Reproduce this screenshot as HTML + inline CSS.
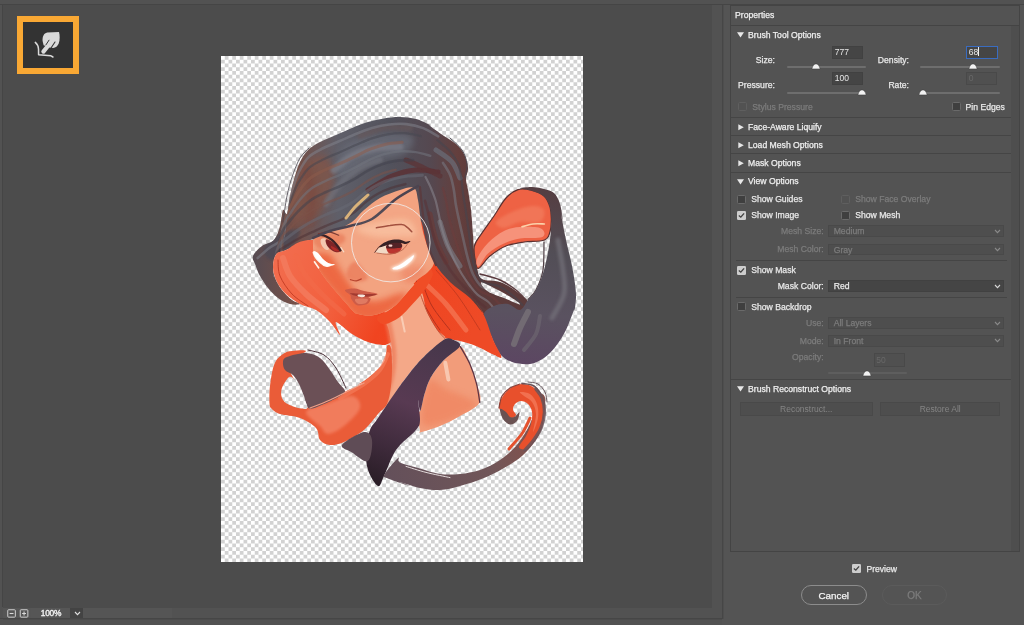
<!DOCTYPE html>
<html lang="en">
<head>
<meta charset="utf-8">
<title>Liquify</title>
<style>
*{box-sizing:border-box;margin:0;padding:0}
html,body{width:1024px;height:625px;overflow:hidden;background:#4c4c4c}
body{position:relative;font-family:"Liberation Sans",sans-serif;font-size:8.5px;color:#e6e6e6}
.abs{position:absolute}
.t{position:absolute;white-space:nowrap;color:#e9e9e9;-webkit-text-stroke:0.25px currentColor}
.t.b{color:#efefef}
.t.dis{color:#7c7c7c}
.t.big{color:#f4f4f4;-webkit-text-stroke:0.25px #f4f4f4}
.hl{position:absolute;height:1px}
.t.z{color:#f2f2f2;-webkit-text-stroke:0.35px #f2f2f2}
.inp{position:absolute;background:#454545;border:1px solid #414141;color:#e6e6e6;padding-left:1.8px;font-size:8.5px;white-space:nowrap}
.inp.focus{border:1px solid #3a6cc0;background:#454545}
.inp.disabled{background:#505050;border-color:#494949;color:#686868}
.caret{display:inline-block;width:1px;height:9px;background:#f0f0f0;vertical-align:-1.5px}
.track{position:absolute;height:2px;border-radius:1px}
.cb{position:absolute;border:1px solid #6a6a6a;background:#3f3f3f;border-radius:1.5px}
.cb.d{border-color:#5f5f5f;background:#525252}
.sel{position:absolute;background:#4e4e4e;border:1px solid #494949;color:#858585;padding-left:4.5px;font-size:8.5px;white-space:nowrap}
.sel.en{background:#454545;border-color:#414141;color:#e9e9e9}
.btn{position:absolute;background:#4e4e4e;border:1px solid #494949;color:#858585;text-align:center;font-size:8.5px}
.pill{position:absolute;border:1px solid #8c8c8c;border-radius:10px}
.pill.off{border-color:#5b5b5b}
</style>
</head>
<body><div id="root" style="position:absolute;left:0;top:0;width:1024px;height:625px;will-change:transform">
<!-- frame -->
<div class="abs" style="left:0;top:0;width:1024px;height:5px;background:#525252"></div>
<div class="abs" style="left:0;top:4px;width:1024px;height:1px;background:#454545"></div>
<div class="abs" style="left:0;top:5px;width:3px;height:620px;background:#525252"></div>
<div class="abs" style="left:2px;top:5px;width:1px;height:602px;background:#454545"></div>

<!-- canvas -->
<div id="canvas" class="abs" style="left:221px;top:56px;width:362px;height:506px;overflow:hidden">
<svg width="362" height="506" viewBox="221 56 362 506" style="position:absolute;left:0;top:0;display:block">
<defs>
<pattern id="chk" x="221" y="56" width="7.5" height="7.5" patternUnits="userSpaceOnUse">
<rect width="7.5" height="7.5" fill="#ffffff"/><rect x="3.75" y="0" width="3.75" height="3.75" fill="#d2d2d2"/><rect x="0" y="3.75" width="3.75" height="3.75" fill="#d2d2d2"/>
</pattern>
<filter id="b1" filterUnits="userSpaceOnUse" x="221" y="56" width="362" height="506"><feGaussianBlur stdDeviation="0.6"/></filter>
<filter id="b2" filterUnits="userSpaceOnUse" x="221" y="56" width="362" height="506"><feGaussianBlur stdDeviation="1.5"/></filter>
<filter id="b3" filterUnits="userSpaceOnUse" x="221" y="56" width="362" height="506"><feGaussianBlur stdDeviation="3"/></filter>
<filter id="b5" filterUnits="userSpaceOnUse" x="221" y="56" width="362" height="506"><feGaussianBlur stdDeviation="5"/></filter>

<linearGradient id="gStrand" gradientUnits="userSpaceOnUse" x1="540" y1="190" x2="520" y2="365">
<stop offset="0" stop-color="#553e42"/><stop offset="0.35" stop-color="#524e56"/><stop offset="0.7" stop-color="#5a5260"/><stop offset="1" stop-color="#5c4662"/></linearGradient>
<linearGradient id="gHair" gradientUnits="userSpaceOnUse" x1="255" y1="200" x2="475" y2="200">
<stop offset="0" stop-color="#584c52"/><stop offset="0.18" stop-color="#755048"/><stop offset="0.38" stop-color="#5f5f69"/><stop offset="0.62" stop-color="#52525c"/><stop offset="0.8" stop-color="#554850"/><stop offset="0.92" stop-color="#643f3d"/><stop offset="1" stop-color="#5c3b3b"/></linearGradient>
<linearGradient id="gTop" gradientUnits="userSpaceOnUse" x1="440" y1="340" x2="380" y2="485">
<stop offset="0" stop-color="#47374b"/><stop offset="0.45" stop-color="#583a52"/><stop offset="0.75" stop-color="#3f2b3c"/><stop offset="1" stop-color="#291d26"/></linearGradient>
<linearGradient id="gSwoosh" gradientUnits="userSpaceOnUse" x1="390" y1="480" x2="545" y2="420">
<stop offset="0" stop-color="#64505a"/><stop offset="0.6" stop-color="#715658"/><stop offset="1" stop-color="#8a5048"/></linearGradient>
<linearGradient id="gRed" gradientUnits="userSpaceOnUse" x1="270" y1="250" x2="470" y2="340">
<stop offset="0" stop-color="#f26e50"/><stop offset="0.35" stop-color="#f2603e"/><stop offset="0.6" stop-color="#f04420"/><stop offset="1" stop-color="#ee4a26"/></linearGradient>
<clipPath id="cFace"><path d="M314.0 237.0C315.2 235.3 316.3 236.2 320.0 235.0C323.7 233.8 330.7 232.2 336.0 230.0C341.3 227.8 347.3 225.3 352.0 222.0C356.7 218.7 359.3 214.0 364.0 210.0C368.7 206.0 374.0 201.3 380.0 198.0C386.0 194.7 394.3 191.7 400.0 190.0C405.7 188.3 411.0 186.3 414.0 188.0C417.0 189.7 417.0 195.5 418.0 200.0C419.0 204.5 419.2 209.7 420.0 215.0C420.8 220.3 421.7 226.5 423.0 232.0C424.3 237.5 426.2 243.0 428.0 248.0C429.8 253.0 434.0 258.0 434.0 262.0C434.0 266.0 431.0 268.8 428.0 272.0C425.0 275.2 419.7 277.3 416.0 281.0C412.3 284.7 410.0 289.5 406.0 294.0C402.0 298.5 397.7 304.4 392.0 308.0C386.3 311.6 377.7 314.5 372.0 315.5C366.3 316.5 361.0 314.6 358.0 314.0C355.0 313.4 355.9 313.9 353.8 312.0C351.7 310.1 348.8 306.2 345.4 302.4C342.0 298.6 337.5 293.8 333.6 289.0C329.7 284.2 325.0 278.9 321.8 273.8C318.6 268.8 315.8 263.5 314.3 258.7C312.8 253.9 313.1 248.6 313.0 245.0C312.9 241.4 312.8 238.7 314.0 237.0Z"/></clipPath>
<clipPath id="cSh"><path d="M459.9 346.2C464.4 346.9 467.5 358.7 470.3 364.9C473.0 371.1 475.0 377.4 476.5 383.6C478.1 389.9 482.4 397.0 479.6 402.4C476.9 407.7 466.6 412.1 460.0 416.0C453.4 419.9 446.7 423.3 440.0 426.0C433.3 428.7 423.3 431.7 420.0 432.4C416.7 433.1 420.5 433.4 420.0 430.0C419.5 426.6 416.9 415.2 417.0 412.0C417.1 408.8 419.1 413.7 420.3 410.7C421.6 407.7 422.8 399.6 424.5 394.0C426.2 388.5 427.6 382.9 430.7 377.4C433.9 371.8 438.4 365.9 443.2 360.7C448.1 355.5 455.4 345.5 459.9 346.2Z"/></clipPath>
<clipPath id="cHair"><path d="M253.0 256.0C254.2 253.0 258.5 248.7 262.0 246.0C265.5 243.3 271.0 243.3 274.0 240.0C277.0 236.7 278.5 231.0 280.0 226.0C281.5 221.0 281.8 212.0 283.0 210.0C284.2 208.0 285.8 216.3 287.0 214.0C288.2 211.7 288.7 202.3 290.0 196.0C291.3 189.7 293.3 181.7 295.0 176.0C296.7 170.3 297.8 166.3 300.0 162.0C302.2 157.7 304.7 153.3 308.0 150.0C311.3 146.7 315.3 144.5 320.0 142.0C324.7 139.5 330.7 137.3 336.0 135.0C341.3 132.7 346.7 130.2 352.0 128.0C357.3 125.8 362.7 123.6 368.0 122.0C373.3 120.4 378.7 119.2 384.0 118.4C389.3 117.6 394.7 116.9 400.0 117.0C405.3 117.1 411.0 117.7 416.0 119.0C421.0 120.3 427.7 123.8 430.0 125.0C432.3 126.2 427.7 124.2 430.0 126.0C432.3 127.8 439.7 133.0 444.0 136.0C448.3 139.0 452.7 141.0 456.0 144.0C459.3 147.0 462.0 150.0 464.0 154.0C466.0 158.0 467.7 163.8 468.0 168.0C468.3 172.2 466.0 175.3 466.0 179.0C466.0 182.7 467.2 184.8 468.0 190.0C468.8 195.2 470.2 202.5 471.0 210.0C471.8 217.5 472.7 231.7 473.0 235.0C473.3 238.3 472.8 227.5 473.0 230.0C473.2 232.5 473.3 243.7 474.0 250.0C474.7 256.3 475.7 263.2 477.0 268.0C478.3 272.8 478.2 276.7 482.0 279.0C485.8 281.3 494.3 280.0 500.0 282.0C505.7 284.0 511.3 287.8 516.0 291.0C520.7 294.2 524.0 297.8 528.0 301.0C532.0 304.2 541.3 306.5 540.0 310.0C538.7 313.5 528.3 317.8 520.0 322.0C511.7 326.2 500.0 337.0 490.0 335.0C480.0 333.0 468.3 319.2 460.0 310.0C451.7 300.8 446.7 290.0 440.0 280.0C433.3 270.0 430.0 258.3 420.0 250.0C410.0 241.7 393.3 232.7 380.0 230.0C366.7 227.3 351.7 232.3 340.0 234.0C328.3 235.7 319.0 237.3 310.0 240.0C301.0 242.7 291.7 247.7 286.0 250.0C280.3 252.3 278.2 251.3 276.0 254.0C273.8 256.7 273.2 262.0 273.0 266.0C272.8 270.0 273.5 274.0 275.0 278.0C276.5 282.0 279.2 286.3 282.0 290.0C284.8 293.7 289.0 297.7 292.0 300.0C295.0 302.3 300.3 303.3 300.0 304.0C299.7 304.7 293.7 305.0 290.0 304.0C286.3 303.0 281.7 300.7 278.0 298.0C274.3 295.3 271.0 291.7 268.0 288.0C265.0 284.3 262.2 280.0 260.0 276.0C257.8 272.0 256.2 267.3 255.0 264.0C253.8 260.7 251.8 259.0 253.0 256.0Z"/></clipPath>

</defs>
<rect x="221" y="56" width="362" height="506" fill="url(#chk)"/>
<g>
<path d="M481.0 234.4C484.3 229.4 489.8 222.1 494.0 216.0C498.2 209.9 502.0 202.4 506.0 198.0C510.0 193.6 513.8 190.9 518.0 189.6C522.2 188.3 526.7 189.1 531.0 190.2C535.3 191.3 540.8 193.2 544.0 196.0C547.2 198.8 548.7 202.9 550.0 207.2C551.3 211.5 551.3 221.2 551.6 222.0C551.9 222.8 551.8 210.7 551.6 212.0C551.4 213.3 551.6 225.3 550.4 230.0C549.2 234.7 548.8 238.0 544.4 240.0C540.0 242.0 530.4 241.0 524.0 242.0C517.6 243.0 511.7 243.7 506.0 246.0C500.3 248.3 494.6 252.3 490.0 256.0C485.4 259.7 480.9 267.7 478.4 268.4C475.9 269.1 475.9 263.7 475.2 260.0C474.5 256.3 473.4 250.3 474.4 246.0C475.4 241.7 477.7 239.4 481.0 234.4Z" fill="#ee6244" stroke="#5a3030" stroke-width="1.2" stroke-linecap="round" stroke-linejoin="round" />
<path d="M477.0 259.0C478.5 255.1 483.5 247.7 488.0 243.0C492.5 238.3 498.7 233.7 504.0 231.0C509.3 228.3 513.8 227.4 520.0 227.0C526.2 226.6 537.3 226.7 541.0 228.4C544.7 230.1 545.9 235.3 542.4 237.0C538.9 238.7 526.4 237.3 520.0 238.4C513.6 239.5 509.3 240.9 504.0 243.4C498.7 245.9 492.2 249.6 488.0 253.4C483.8 257.2 480.6 265.5 478.8 266.4C477.0 267.3 475.5 262.9 477.0 259.0Z" fill="#f6927a" filter="url(#b1)" />
<path d="M496.0 222.0C497.3 219.3 506.0 214.7 512.0 212.0C518.0 209.3 526.7 206.3 532.0 206.0C537.3 205.7 542.7 207.3 544.0 210.0C545.3 212.7 544.0 220.0 540.0 222.0C536.0 224.0 526.0 221.0 520.0 222.0C514.0 223.0 508.0 228.0 504.0 228.0C500.0 228.0 494.7 224.7 496.0 222.0Z" fill="#f27a5c" opacity="0.8" filter="url(#b2)" />
<path d="M522.0 226.8C523.8 226.3 529.3 224.5 533.0 224.0C536.7 223.5 542.5 224.0 544.4 224.0" fill="none" stroke="#fbd2aa" stroke-width="1.6" stroke-linecap="round" stroke-linejoin="round" />
<path d="M480.0 274.0C483.3 275.0 494.0 277.3 500.0 280.0C506.0 282.7 511.6 286.6 516.0 290.0C520.4 293.4 524.7 298.7 526.4 300.4" fill="none" stroke="#5a3a3e" stroke-width="1.5" stroke-linecap="round" stroke-linejoin="round" />
<path d="M544.0 242.0C543.8 246.7 544.3 262.0 543.0 270.0C541.7 278.0 538.5 285.1 536.0 290.0C533.5 294.9 529.3 298.0 528.0 299.6" fill="none" stroke="#4e3e44" stroke-width="1.2" stroke-linecap="round" stroke-linejoin="round" />
<path d="M253.0 256.0C254.2 253.0 258.5 248.7 262.0 246.0C265.5 243.3 271.0 243.3 274.0 240.0C277.0 236.7 278.5 231.0 280.0 226.0C281.5 221.0 281.8 212.0 283.0 210.0C284.2 208.0 285.8 216.3 287.0 214.0C288.2 211.7 288.7 202.3 290.0 196.0C291.3 189.7 293.3 181.7 295.0 176.0C296.7 170.3 297.8 166.3 300.0 162.0C302.2 157.7 304.7 153.3 308.0 150.0C311.3 146.7 315.3 144.5 320.0 142.0C324.7 139.5 330.7 137.3 336.0 135.0C341.3 132.7 346.7 130.2 352.0 128.0C357.3 125.8 362.7 123.6 368.0 122.0C373.3 120.4 378.7 119.2 384.0 118.4C389.3 117.6 394.7 116.9 400.0 117.0C405.3 117.1 411.0 117.7 416.0 119.0C421.0 120.3 427.7 123.8 430.0 125.0C432.3 126.2 427.7 124.2 430.0 126.0C432.3 127.8 439.7 133.0 444.0 136.0C448.3 139.0 452.7 141.0 456.0 144.0C459.3 147.0 462.0 150.0 464.0 154.0C466.0 158.0 467.7 163.8 468.0 168.0C468.3 172.2 466.0 175.3 466.0 179.0C466.0 182.7 467.2 184.8 468.0 190.0C468.8 195.2 470.2 202.5 471.0 210.0C471.8 217.5 472.7 231.7 473.0 235.0C473.3 238.3 472.8 227.5 473.0 230.0C473.2 232.5 473.3 243.7 474.0 250.0C474.7 256.3 475.7 263.2 477.0 268.0C478.3 272.8 478.2 276.7 482.0 279.0C485.8 281.3 494.3 280.0 500.0 282.0C505.7 284.0 511.3 287.8 516.0 291.0C520.7 294.2 524.0 297.8 528.0 301.0C532.0 304.2 541.3 306.5 540.0 310.0C538.7 313.5 528.3 317.8 520.0 322.0C511.7 326.2 500.0 337.0 490.0 335.0C480.0 333.0 468.3 319.2 460.0 310.0C451.7 300.8 446.7 290.0 440.0 280.0C433.3 270.0 430.0 258.3 420.0 250.0C410.0 241.7 393.3 232.7 380.0 230.0C366.7 227.3 351.7 232.3 340.0 234.0C328.3 235.7 319.0 237.3 310.0 240.0C301.0 242.7 291.7 247.7 286.0 250.0C280.3 252.3 278.2 251.3 276.0 254.0C273.8 256.7 273.2 262.0 273.0 266.0C272.8 270.0 273.5 274.0 275.0 278.0C276.5 282.0 279.2 286.3 282.0 290.0C284.8 293.7 289.0 297.7 292.0 300.0C295.0 302.3 300.3 303.3 300.0 304.0C299.7 304.7 293.7 305.0 290.0 304.0C286.3 303.0 281.7 300.7 278.0 298.0C274.3 295.3 271.0 291.7 268.0 288.0C265.0 284.3 262.2 280.0 260.0 276.0C257.8 272.0 256.2 267.3 255.0 264.0C253.8 260.7 251.8 259.0 253.0 256.0Z" fill="url(#gHair)" />
<g clip-path="url(#cHair)">
<path d="M300.0 170.0C305.3 160.3 318.3 155.0 324.0 156.0C329.7 157.0 333.7 168.0 334.0 176.0C334.3 184.0 330.7 196.3 326.0 204.0C321.3 211.7 311.7 220.3 306.0 222.0C300.3 223.7 293.0 222.7 292.0 214.0C291.0 205.3 294.7 179.7 300.0 170.0Z" fill="#80554a" opacity="0.8" filter="url(#b3)" />
<path d="M344.0 146.0C350.7 139.0 368.7 135.7 380.0 134.0C391.3 132.3 408.0 132.7 412.0 136.0C416.0 139.3 411.3 149.7 404.0 154.0C396.7 158.3 378.7 158.3 368.0 162.0C357.3 165.7 344.0 178.7 340.0 176.0C336.0 173.3 337.3 153.0 344.0 146.0Z" fill="#686a76" opacity="0.8" filter="url(#b3)" />
<path d="M264.0 248.0C265.3 243.7 274.0 237.0 280.0 234.0C286.0 231.0 298.0 228.0 300.0 230.0C302.0 232.0 296.7 241.0 292.0 246.0C287.3 251.0 276.7 259.7 272.0 260.0C267.3 260.3 262.7 252.3 264.0 248.0Z" fill="#4c4a54" opacity="0.8" filter="url(#b2)" />
<path d="M334.0 170.0C337.0 167.7 345.0 159.7 352.0 156.0C359.0 152.3 368.0 149.5 376.0 148.0C384.0 146.5 396.0 147.2 400.0 147.0" fill="none" stroke="#7c7d87" stroke-width="7" stroke-linecap="round" stroke-linejoin="round" opacity="0.75" filter="url(#b2)" />
<path d="M326.0 204.0C328.3 200.7 334.3 190.0 340.0 184.0C345.7 178.0 353.3 172.0 360.0 168.0C366.7 164.0 376.7 161.3 380.0 160.0" fill="none" stroke="#71727c" stroke-width="6" stroke-linecap="round" stroke-linejoin="round" opacity="0.7" filter="url(#b2)" />
<path d="M306.0 170.0C307.0 174.0 311.3 185.3 312.0 194.0C312.7 202.7 310.3 217.3 310.0 222.0" fill="none" stroke="#7a4a40" stroke-width="9" stroke-linecap="round" stroke-linejoin="round" opacity="0.7" filter="url(#b3)" />
<path d="M360.0 136.0C364.0 134.7 375.7 129.3 384.0 128.0C392.3 126.7 405.7 128.0 410.0 128.0" fill="none" stroke="#66585c" stroke-width="6" stroke-linecap="round" stroke-linejoin="round" opacity="0.7" filter="url(#b2)" />
<path d="M368.0 190.0C372.0 187.7 384.0 179.3 392.0 176.0C400.0 172.7 408.3 170.7 416.0 170.0C423.7 169.3 434.3 171.7 438.0 172.0" fill="none" stroke="#5c3236" stroke-width="5" stroke-linecap="round" stroke-linejoin="round" opacity="0.85" filter="url(#b1)" />
<path d="M406.0 160.0C409.0 161.3 418.3 165.3 424.0 168.0C429.7 170.7 437.3 174.7 440.0 176.0" fill="none" stroke="#5c3438" stroke-width="5" stroke-linecap="round" stroke-linejoin="round" opacity="0.8" filter="url(#b1)" />
<path d="M436.0 150.0C438.7 152.0 448.0 157.3 452.0 162.0C456.0 166.7 458.7 175.3 460.0 178.0" fill="none" stroke="#6b6e7a" stroke-width="5" stroke-linecap="round" stroke-linejoin="round" opacity="0.7" filter="url(#b1)" />
<path d="M440.0 222.0C441.3 226.0 444.7 238.7 448.0 246.0C451.3 253.3 458.0 262.7 460.0 266.0" fill="none" stroke="#77757c" stroke-width="5" stroke-linecap="round" stroke-linejoin="round" opacity="0.7" filter="url(#b1)" />
<path d="M430.0 214.0C431.0 218.3 433.3 232.0 436.0 240.0C438.7 248.0 444.3 258.3 446.0 262.0" fill="none" stroke="#6a3a38" stroke-width="5" stroke-linecap="round" stroke-linejoin="round" opacity="0.7" filter="url(#b1)" />
<path d="M438.2 136.3C435.7 135.0 428.5 130.2 423.2 128.1C417.9 126.1 412.1 124.7 406.5 124.1C400.8 123.5 394.8 123.8 389.1 124.5C383.4 125.1 377.6 126.4 372.1 128.0C366.5 129.6 361.1 131.8 355.7 134.0C350.3 136.2 345.0 138.7 339.6 141.0C334.3 143.3 328.7 145.3 323.5 148.0C318.3 150.7 312.6 153.1 308.6 157.1C304.5 161.0 301.7 166.4 299.1 171.5C296.5 176.5 294.8 182.1 293.0 187.6C291.3 193.0 289.7 198.5 288.4 204.1C287.1 209.7 286.3 215.6 285.4 221.4C284.4 227.1 285.3 234.2 282.7 238.6C280.1 242.9 273.8 244.5 269.6 247.7C265.4 250.9 259.7 256.3 257.7 258.0" fill="none" stroke="#80818b" stroke-width="2.6" stroke-linecap="round" stroke-linejoin="round" opacity="0.55" filter="url(#b1)" />
<path d="M420.7 136.1C417.9 135.6 409.8 133.5 404.3 133.2C398.8 132.9 393.0 133.5 387.5 134.4C382.0 135.3 376.5 136.8 371.2 138.6C365.8 140.4 360.8 142.9 355.6 145.1C350.4 147.4 345.2 149.9 339.9 152.2C334.7 154.5 329.3 156.4 324.2 159.0C319.1 161.6 313.5 164.0 309.4 167.6C305.3 171.3 302.2 176.2 299.4 180.9C296.5 185.5 294.5 190.7 292.4 195.7C290.3 200.7 288.2 205.7 286.8 211.0C285.4 216.4 284.5 222.3 283.8 227.9C283.0 233.5 282.4 241.8 282.1 244.6" fill="none" stroke="#474751" stroke-width="2.2" stroke-linecap="round" stroke-linejoin="round" opacity="0.55" filter="url(#b1)" />
<path d="M402.2 142.3C399.4 142.6 391.2 143.1 385.9 144.3C380.6 145.4 375.3 147.2 370.2 149.2C365.2 151.2 360.4 153.9 355.4 156.3C350.4 158.7 345.4 161.1 340.3 163.4C335.2 165.7 329.8 167.5 324.8 170.0C319.8 172.5 314.4 174.8 310.2 178.2C306.1 181.6 302.8 186.0 299.7 190.3C296.6 194.5 294.2 199.2 291.8 203.8C289.4 208.4 286.8 212.9 285.2 218.0C283.6 223.1 282.8 229.0 282.1 234.4C281.5 239.9 282.8 246.3 281.5 250.7C280.2 255.0 275.6 258.7 274.4 260.3" fill="none" stroke="#8c5c4c" stroke-width="3" stroke-linecap="round" stroke-linejoin="round" opacity="0.55" filter="url(#b1)" />
<path d="M430.3 155.8C427.9 155.2 420.7 152.8 415.6 152.1C410.6 151.4 405.2 151.1 400.0 151.4C394.8 151.8 389.4 152.8 384.3 154.2C379.2 155.6 374.2 157.6 369.3 159.8C364.5 162.0 360.0 165.0 355.3 167.4C350.5 169.9 345.6 172.4 340.6 174.6C335.6 176.9 330.4 178.6 325.5 181.0C320.5 183.4 315.3 185.7 311.1 188.8C306.9 191.9 303.3 195.8 300.0 199.7C296.7 203.5 293.9 207.7 291.2 212.0C288.4 216.2 285.4 220.1 283.7 224.9C281.9 229.8 281.0 235.7 280.5 241.0C280.1 246.3 281.6 252.4 280.9 256.7C280.3 261.0 277.9 263.4 276.8 266.6C275.6 269.8 274.7 274.4 274.2 276.0" fill="none" stroke="#72747e" stroke-width="2.4" stroke-linecap="round" stroke-linejoin="round" opacity="0.55" filter="url(#b1)" />
<path d="M413.1 160.1C410.6 160.2 402.9 159.9 397.9 160.6C392.8 161.2 387.6 162.4 382.7 164.1C377.8 165.7 373.0 167.9 368.4 170.4C363.8 172.8 359.7 176.0 355.1 178.6C350.5 181.2 345.7 183.6 340.9 185.8C336.1 188.1 330.9 189.8 326.1 192.0C321.3 194.3 316.2 196.5 311.9 199.3C307.6 202.2 303.9 205.6 300.3 209.1C296.7 212.5 293.6 216.3 290.5 220.1C287.5 223.9 284.0 227.3 282.1 231.9C280.2 236.4 279.2 242.3 278.9 247.5C278.6 252.6 280.1 260.2 280.4 262.8" fill="none" stroke="#43434d" stroke-width="2.6" stroke-linecap="round" stroke-linejoin="round" opacity="0.55" filter="url(#b1)" />
<path d="M395.7 169.7C393.3 170.4 385.8 172.1 381.1 174.0C376.4 175.8 371.9 178.3 367.5 181.0C363.1 183.6 359.3 187.0 355.0 189.7C350.6 192.4 345.9 194.8 341.2 197.1C336.5 199.3 331.5 200.9 326.7 203.0C322.0 205.2 317.1 207.3 312.8 209.9C308.4 212.5 304.4 215.4 300.6 218.5C296.8 221.5 293.2 224.8 289.9 228.2C286.5 231.6 282.6 234.5 280.5 238.8C278.4 243.1 277.5 249.0 277.3 254.0C277.2 259.0 279.1 264.6 279.8 268.8C280.5 273.0 281.3 277.4 281.5 279.2" fill="none" stroke="#7c5248" stroke-width="2.2" stroke-linecap="round" stroke-linejoin="round" opacity="0.55" filter="url(#b1)" />
<path d="M422.4 175.2C420.0 175.4 412.9 175.5 408.1 176.1C403.3 176.7 398.3 177.5 393.6 178.8C388.8 180.1 384.0 181.7 379.5 183.9C375.0 186.0 370.7 188.7 366.6 191.5C362.5 194.4 359.0 198.1 354.8 200.9C350.6 203.7 346.1 206.1 341.5 208.3C337.0 210.5 332.0 212.0 327.4 214.0C322.7 216.1 318.0 218.2 313.6 220.5C309.2 222.8 305.0 225.2 300.9 227.9C296.9 230.5 292.9 233.4 289.3 236.3C285.6 239.3 281.2 241.7 279.0 245.7C276.7 249.8 275.7 255.7 275.7 260.5C275.8 265.4 277.8 270.7 279.2 274.9C280.6 279.0 282.0 282.3 283.9 285.4C285.9 288.6 289.7 292.6 290.8 294.0" fill="none" stroke="#686a74" stroke-width="3" stroke-linecap="round" stroke-linejoin="round" opacity="0.55" filter="url(#b1)" />
<path d="M405.5 184.1C403.2 184.8 396.0 186.3 391.4 187.9C386.8 189.5 382.2 191.4 377.9 193.8C373.6 196.1 369.6 199.1 365.7 202.1C361.8 205.2 358.6 209.1 354.6 212.0C350.7 214.9 346.3 217.3 341.9 219.5C337.4 221.7 332.6 223.1 328.0 225.0C323.5 227.0 318.9 229.0 314.5 231.1C310.0 233.1 305.5 235.0 301.2 237.3C296.9 239.5 292.6 241.9 288.6 244.5C284.7 247.0 279.8 248.9 277.4 252.7C275.0 256.4 273.9 262.4 274.1 267.1C274.3 271.8 277.9 278.6 278.6 280.9" fill="none" stroke="#4d3236" stroke-width="2.4" stroke-linecap="round" stroke-linejoin="round" opacity="0.55" filter="url(#b1)" />
<path d="M437.4 140.2C439.3 141.8 445.6 146.4 449.0 150.2C452.4 154.0 455.6 158.3 457.7 162.9C459.8 167.5 460.5 172.7 461.4 177.8C462.3 182.9 462.3 188.2 463.0 193.4C463.7 198.6 464.7 203.8 465.5 208.9C466.3 214.1 467.1 219.2 467.8 224.3C468.5 229.4 469.2 234.6 469.9 239.7C470.5 244.8 471.0 249.9 471.9 255.0C472.9 260.0 473.5 265.4 475.4 270.0C477.3 274.5 479.6 279.6 483.5 282.3C487.3 284.9 493.8 283.9 498.5 285.9C503.1 287.9 507.4 291.1 511.4 294.3C515.4 297.5 520.7 303.3 522.6 305.1" fill="none" stroke="#45454f" stroke-width="2.2" stroke-linecap="round" stroke-linejoin="round" opacity="0.55" filter="url(#b1)" />
<path d="M443.0 162.8C444.2 164.9 448.5 171.0 450.3 175.4C452.1 179.9 452.9 184.8 453.8 189.7C454.7 194.5 455.0 199.6 455.8 204.5C456.7 209.4 457.7 214.3 458.8 219.1C459.8 224.0 460.9 228.7 462.0 233.4C463.1 238.2 464.1 243.0 465.2 247.6C466.3 252.3 467.3 256.9 468.7 261.5C470.0 266.0 471.2 270.8 473.4 275.0C475.5 279.1 478.0 283.8 481.6 286.5C485.2 289.2 492.9 290.5 495.1 291.3" fill="none" stroke="#787a84" stroke-width="2.6" stroke-linecap="round" stroke-linejoin="round" opacity="0.55" filter="url(#b1)" />
<path d="M442.9 188.0C443.5 190.2 445.3 197.0 446.2 201.6C447.2 206.2 447.7 211.0 448.6 215.6C449.6 220.2 450.8 224.9 452.1 229.4C453.3 233.9 454.8 238.2 456.2 242.6C457.7 246.9 459.0 251.3 460.6 255.6C462.1 259.8 463.6 263.9 465.4 268.0C467.2 272.0 469.0 276.2 471.4 280.0C473.8 283.8 476.3 287.9 479.7 290.7C483.1 293.5 488.2 294.0 491.8 296.6C495.4 299.2 499.7 304.5 501.3 306.1" fill="none" stroke="#6e3e3c" stroke-width="2.4" stroke-linecap="round" stroke-linejoin="round" opacity="0.55" filter="url(#b1)" />
<path d="M425.5 176.9C426.4 178.8 429.3 184.2 431.0 188.2C432.6 192.1 434.3 196.3 435.6 200.5C436.8 204.7 437.6 209.2 438.6 213.5C439.6 217.9 440.3 222.4 441.5 226.7C442.6 231.1 443.9 235.4 445.4 239.6C446.9 243.8 448.7 247.7 450.5 251.7C452.2 255.7 454.0 259.7 455.9 263.5C457.9 267.3 459.9 270.9 462.1 274.5C464.4 278.1 466.7 281.6 469.3 285.0C472.0 288.4 474.6 292.1 477.8 294.9C481.0 297.7 485.5 299.1 488.5 302.0C491.6 304.8 493.9 308.5 496.2 312.1C498.6 315.6 501.5 321.5 502.6 323.4" fill="none" stroke="#8a8890" stroke-width="2.2" stroke-linecap="round" stroke-linejoin="round" opacity="0.55" filter="url(#b1)" />
<path d="M425.0 200.8C425.5 202.9 427.2 208.9 428.2 213.0C429.2 217.1 430.0 221.3 431.0 225.4C432.0 229.6 433.0 233.8 434.3 237.8C435.6 241.9 436.9 246.0 438.6 249.8C440.4 253.7 442.6 257.2 444.7 260.8C446.8 264.4 448.9 268.0 451.3 271.4C453.7 274.8 456.2 277.9 458.9 281.0C461.6 284.1 464.5 287.0 467.3 290.0C470.2 293.0 473.0 296.2 475.9 299.1C478.9 302.0 483.7 305.9 485.2 307.3" fill="none" stroke="#5a3236" stroke-width="2.6" stroke-linecap="round" stroke-linejoin="round" opacity="0.55" filter="url(#b1)" />
</g>
<path d="M283.0 222.0C283.7 217.7 285.4 203.7 287.0 196.0C288.6 188.3 290.2 182.3 292.4 176.0C294.6 169.7 297.2 162.7 300.0 158.0C302.8 153.3 307.5 149.7 309.0 148.0" fill="none" stroke="#4a4650" stroke-width="0.8" stroke-linecap="round" stroke-linejoin="round" />
<path d="M450.0 138.0C452.0 140.0 459.2 145.7 462.0 150.0C464.8 154.3 466.5 159.3 467.0 164.0C467.5 168.7 465.3 175.7 465.0 178.0" fill="none" stroke="#4a4650" stroke-width="0.9" stroke-linecap="round" stroke-linejoin="round" />
<path d="M481.0 282.4C482.3 282.0 490.8 286.4 496.0 289.0C501.2 291.6 508.0 295.4 512.0 298.0C516.0 300.6 521.3 304.4 520.0 304.4C518.7 304.4 509.3 300.1 504.0 298.0C498.7 295.9 491.8 294.2 488.0 291.6C484.2 289.0 479.7 282.8 481.0 282.4Z" fill="url(#chk)" />
<path d="M520.0 188.4C520.1 187.8 528.0 186.9 532.0 187.0C536.0 187.1 540.3 188.0 544.0 189.0C547.7 190.0 551.3 190.5 554.0 193.0C556.7 195.5 558.5 199.2 560.0 204.0C561.5 208.8 562.8 220.3 563.0 222.0C563.2 223.7 560.5 211.0 561.0 214.0C561.5 217.0 564.2 231.3 566.0 240.0C567.8 248.7 570.3 257.0 572.0 266.0C573.7 275.0 575.7 286.0 576.0 294.0C576.3 302.0 574.3 311.3 574.0 314.0C573.7 316.7 575.3 307.3 574.0 310.0C572.7 312.7 569.0 324.0 566.0 330.0C563.0 336.0 559.7 341.3 556.0 346.0C552.3 350.7 548.3 355.0 544.0 358.0C539.7 361.0 535.3 363.3 530.0 364.0C524.7 364.7 517.0 363.7 512.0 362.0C507.0 360.3 503.3 358.0 500.0 354.0C496.7 350.0 494.3 343.3 492.0 338.0C489.7 332.7 486.7 323.3 486.0 322.0C485.3 320.7 488.3 331.3 488.0 330.0C487.7 328.7 483.0 318.0 484.0 314.0C485.0 310.0 490.0 307.7 494.0 306.0C498.0 304.3 503.7 303.3 508.0 304.0C512.3 304.7 516.7 310.7 520.0 310.0C523.3 309.3 525.3 303.3 528.0 300.0C530.7 296.7 533.3 295.0 536.0 290.0C538.7 285.0 541.7 278.3 544.0 270.0C546.3 261.7 548.7 249.3 550.0 240.0C551.3 230.7 551.3 217.0 551.6 214.0C551.9 211.0 551.9 223.1 551.6 222.0C551.3 220.9 551.2 211.8 550.0 207.6C548.8 203.4 547.5 199.6 544.4 196.8C541.3 194.0 535.7 192.0 531.6 190.6C527.5 189.2 519.9 189.0 520.0 188.4Z" fill="url(#gStrand)" />
<path d="M558.0 240.0C558.8 245.0 562.0 261.0 563.0 270.0C564.0 279.0 565.8 286.0 564.0 294.0C562.2 302.0 554.0 314.0 552.0 318.0" fill="none" stroke="#75727a" stroke-width="5" stroke-linecap="round" stroke-linejoin="round" opacity="0.7" filter="url(#b2)" />
<path d="M528.0 312.0C526.7 314.7 522.3 322.7 520.0 328.0C517.7 333.3 515.0 341.3 514.0 344.0" fill="none" stroke="#787278" stroke-width="6" stroke-linecap="round" stroke-linejoin="round" opacity="0.8" filter="url(#b1)" />
<path d="M540.0 316.0C539.3 319.0 538.7 328.3 536.0 334.0C533.3 339.7 526.0 347.3 524.0 350.0" fill="none" stroke="#6d6670" stroke-width="4" stroke-linecap="round" stroke-linejoin="round" opacity="0.7" filter="url(#b1)" />
<path d="M312.0 240.0C296.3 240.0 292.0 247.6 286.0 250.0C280.0 252.4 278.2 251.4 276.0 254.4C273.8 257.4 272.8 263.4 273.0 268.0C273.2 272.6 274.8 277.7 277.0 282.0C279.2 286.3 282.2 290.3 286.0 294.0C289.8 297.7 295.0 301.3 300.0 304.0C305.0 306.7 311.0 307.0 316.0 310.0C321.0 313.0 326.0 317.8 330.0 322.0C334.0 326.2 339.0 335.0 340.0 335.0C341.0 335.0 334.0 322.2 336.0 322.0C338.0 321.8 346.7 330.7 352.0 334.0C357.3 337.3 362.7 340.2 368.0 342.0C373.3 343.8 380.0 345.0 384.0 345.0C388.0 345.0 389.1 342.5 392.0 342.0C394.9 341.5 395.5 343.7 401.6 342.0C407.7 340.3 421.4 332.2 428.7 331.6C435.9 331.0 440.1 336.7 445.3 338.3C450.5 339.8 454.7 339.7 459.9 341.0C465.1 342.3 471.0 343.9 476.5 346.2C482.1 348.4 489.0 352.7 493.2 354.5C497.3 356.3 501.5 359.4 501.5 357.0C501.5 354.6 495.9 346.6 493.2 339.9C490.4 333.3 487.6 323.3 484.8 317.0C482.1 310.8 479.3 307.0 476.5 302.5C473.7 298.0 466.9 288.1 468.2 290.0C469.4 291.9 483.7 312.7 484.0 314.0C484.3 315.3 475.7 303.3 470.0 298.0C464.3 292.7 456.0 288.0 450.0 282.0C444.0 276.0 438.0 269.0 434.0 262.0C430.0 255.0 428.3 246.7 426.0 240.0C423.7 233.3 421.7 217.0 420.0 222.0C418.3 227.0 422.7 265.3 416.0 270.0C409.3 274.7 397.3 255.0 380.0 250.0C362.7 245.0 327.7 240.0 312.0 240.0Z" fill="url(#gRed)" />
<path d="M283.0 258.0C284.2 261.0 286.2 270.0 290.0 276.0C293.8 282.0 300.0 288.3 306.0 294.0C312.0 299.7 322.7 307.3 326.0 310.0" fill="none" stroke="#f47c5e" stroke-width="6" stroke-linecap="round" stroke-linejoin="round" opacity="0.8" filter="url(#b1)" />
<path d="M296.0 256.0C297.7 259.3 301.3 269.3 306.0 276.0C310.7 282.7 317.7 289.7 324.0 296.0C330.3 302.3 340.7 311.0 344.0 314.0" fill="none" stroke="#f36a48" stroke-width="5" stroke-linecap="round" stroke-linejoin="round" opacity="0.7" filter="url(#b1)" />
<path d="M428.0 286.0C431.0 289.0 439.7 296.7 446.0 304.0C452.3 311.3 462.7 325.7 466.0 330.0" fill="none" stroke="#f57a58" stroke-width="5" stroke-linecap="round" stroke-linejoin="round" opacity="0.7" filter="url(#b1)" />
<path d="M278.0 260.0C278.3 262.7 277.7 270.3 280.0 276.0C282.3 281.7 287.3 289.0 292.0 294.0C296.7 299.0 305.3 304.0 308.0 306.0" fill="none" stroke="#c23a22" stroke-width="0.9" stroke-linecap="round" stroke-linejoin="round" />
<path d="M422.0 282.0C423.7 286.0 427.3 298.0 432.0 306.0C436.7 314.0 447.0 326.0 450.0 330.0" fill="none" stroke="#b5321e" stroke-width="1.0" stroke-linecap="round" stroke-linejoin="round" />
<path d="M436.0 270.0C439.7 274.3 450.7 286.0 458.0 296.0C465.3 306.0 476.3 324.3 480.0 330.0" fill="none" stroke="#c2391f" stroke-width="0.9" stroke-linecap="round" stroke-linejoin="round" />
<path d="M416.0 278.0C416.7 281.0 417.3 289.3 420.0 296.0C422.7 302.7 428.7 312.3 432.0 318.0C435.3 323.7 438.7 328.0 440.0 330.0" fill="none" stroke="#b5321e" stroke-width="1.0" stroke-linecap="round" stroke-linejoin="round" />
<path d="M385.0 310.8C382.9 319.1 387.9 324.7 389.1 331.6C390.3 338.5 391.9 345.5 392.2 352.4C392.6 359.4 392.6 365.9 391.2 373.2C389.8 380.5 385.7 390.6 383.9 396.1C382.2 401.7 380.4 404.9 380.8 406.5C381.3 408.1 383.2 409.5 386.6 405.7C390.1 401.9 396.7 390.4 401.6 383.6C406.5 376.8 411.3 370.5 416.2 364.9C421.0 359.4 425.9 354.7 430.7 350.3C435.6 346.0 444.3 342.4 445.3 338.9C446.3 335.4 440.1 334.2 437.0 329.5C433.9 324.9 429.4 317.4 426.6 310.8C423.8 304.2 424.5 294.9 420.3 290.0C416.2 285.1 407.5 278.2 401.6 281.7C395.7 285.1 387.0 302.5 385.0 310.8Z" fill="#f4a888" />
<path d="M388.1 321.2C389.0 326.4 392.8 343.1 393.3 352.4C393.8 361.8 392.9 369.1 391.2 377.4C389.5 385.7 384.3 398.2 382.9 402.4" fill="none" stroke="#ee7c58" stroke-width="6" stroke-linecap="round" stroke-linejoin="round" opacity="0.75" filter="url(#b2)" />
<path d="M401.6 317.0 L404.7 331.6" fill="none" stroke="#fbd5c0" stroke-width="2" stroke-linecap="round" stroke-linejoin="round" opacity="0.8" filter="url(#b1)" />
<path d="M420.3 294.2C421.6 297.3 424.8 306.9 427.6 312.9C430.5 318.9 434.5 325.6 437.4 329.9C440.3 334.3 444.0 337.4 445.3 338.9" fill="none" stroke="#c04a30" stroke-width="0.9" stroke-linecap="round" stroke-linejoin="round" />
<path d="M426.1 267.1C423.5 268.2 421.3 275.8 417.6 280.5C414.0 285.3 408.7 290.9 404.2 295.7C399.7 300.4 395.2 305.5 390.8 309.1C386.3 312.8 378.4 315.0 377.3 317.5C376.2 320.0 380.4 324.2 384.0 324.2C387.7 324.2 394.4 320.9 399.2 317.5C403.9 314.2 408.3 308.8 412.6 304.1C416.9 299.3 421.8 294.0 425.2 288.9C428.6 283.9 432.6 277.5 432.8 273.8C432.9 270.2 428.6 266.0 426.1 267.1Z" fill="#f04e28" filter="url(#b1)" />
<path d="M459.9 346.2C464.4 346.9 467.5 358.7 470.3 364.9C473.0 371.1 475.0 377.4 476.5 383.6C478.1 389.9 482.4 397.0 479.6 402.4C476.9 407.7 466.6 412.1 460.0 416.0C453.4 419.9 446.7 423.3 440.0 426.0C433.3 428.7 423.3 431.7 420.0 432.4C416.7 433.1 420.5 433.4 420.0 430.0C419.5 426.6 416.9 415.2 417.0 412.0C417.1 408.8 419.1 413.7 420.3 410.7C421.6 407.7 422.8 399.6 424.5 394.0C426.2 388.5 427.6 382.9 430.7 377.4C433.9 371.8 438.4 365.9 443.2 360.7C448.1 355.5 455.4 345.5 459.9 346.2Z" fill="#f29c7a" />
<g clip-path="url(#cSh)">
<path d="M445.3 362.8 L448.4 379.5" fill="none" stroke="#f9cdb6" stroke-width="4" stroke-linecap="round" stroke-linejoin="round" opacity="0.9" filter="url(#b1)" />
<path d="M428.7 381.5C432.8 376.0 440.8 387.1 447.4 389.9C454.0 392.6 463.3 395.4 468.2 398.2C473.0 401.0 480.0 402.7 476.5 406.5C473.0 410.3 456.4 418.3 447.4 421.1C438.4 423.9 425.5 429.7 422.4 423.2C419.3 416.6 424.5 387.1 428.7 381.5Z" fill="#ef8560" opacity="0.75" filter="url(#b3)" />
</g>
<path d="M460.3 346.6C462.0 349.6 467.6 358.7 470.3 364.9C473.0 371.1 474.9 377.4 476.5 383.6C478.1 389.9 479.3 399.2 479.8 402.4" fill="none" stroke="#5e3444" stroke-width="1.3" stroke-linecap="round" stroke-linejoin="round" />
<path d="M445.3 338.9C441.5 340.6 435.6 346.0 430.7 350.3C425.9 354.7 421.0 359.4 416.2 364.9C411.3 370.5 406.5 377.0 401.6 383.6C396.8 390.2 391.2 398.4 387.0 404.4C382.9 410.5 379.5 415.8 376.6 420.0C373.8 424.3 371.8 425.0 370.0 430.0C368.2 435.0 366.3 443.3 366.0 450.0C365.7 456.7 366.0 464.0 368.0 470.0C370.0 476.0 375.3 485.0 378.0 486.0C380.7 487.0 381.0 482.0 384.0 476.0C387.0 470.0 390.7 457.7 396.0 450.0C401.3 442.3 412.0 435.0 416.0 430.0C420.0 425.0 419.7 425.0 420.0 420.0C420.3 415.0 417.9 401.6 418.0 400.0C418.1 398.4 419.3 411.7 420.3 410.7C421.4 409.7 422.8 399.6 424.5 394.0C426.2 388.5 427.6 382.9 430.7 377.4C433.9 371.8 438.4 365.9 443.2 360.7C448.1 355.5 458.1 349.6 459.9 346.2C461.6 342.7 456.1 341.1 453.6 339.9C451.2 338.7 449.1 337.2 445.3 338.9Z" fill="url(#gTop)" />
<path d="M314.0 237.0C315.2 235.3 316.3 236.2 320.0 235.0C323.7 233.8 330.7 232.2 336.0 230.0C341.3 227.8 347.3 225.3 352.0 222.0C356.7 218.7 359.3 214.0 364.0 210.0C368.7 206.0 374.0 201.3 380.0 198.0C386.0 194.7 394.3 191.7 400.0 190.0C405.7 188.3 411.0 186.3 414.0 188.0C417.0 189.7 417.0 195.5 418.0 200.0C419.0 204.5 419.2 209.7 420.0 215.0C420.8 220.3 421.7 226.5 423.0 232.0C424.3 237.5 426.2 243.0 428.0 248.0C429.8 253.0 434.0 258.0 434.0 262.0C434.0 266.0 431.0 268.8 428.0 272.0C425.0 275.2 419.7 277.3 416.0 281.0C412.3 284.7 410.0 289.5 406.0 294.0C402.0 298.5 397.7 304.4 392.0 308.0C386.3 311.6 377.7 314.5 372.0 315.5C366.3 316.5 361.0 314.6 358.0 314.0C355.0 313.4 355.9 313.9 353.8 312.0C351.7 310.1 348.8 306.2 345.4 302.4C342.0 298.6 337.5 293.8 333.6 289.0C329.7 284.2 325.0 278.9 321.8 273.8C318.6 268.8 315.8 263.5 314.3 258.7C312.8 253.9 313.1 248.6 313.0 245.0C312.9 241.4 312.8 238.7 314.0 237.0Z" fill="#f3a380" />
<g clip-path="url(#cFace)">
<path d="M355.5 228.4C356.3 225.9 372.0 223.1 380.7 221.7C389.4 220.3 401.7 217.8 407.6 220.0C413.4 222.3 417.1 232.4 416.0 235.2C414.8 238.0 407.6 236.6 400.8 236.8C394.1 237.1 383.2 238.2 375.6 236.8C368.1 235.4 354.6 231.0 355.5 228.4Z" fill="#f8bc9a" opacity="0.95" filter="url(#b3)" />
<path d="M310.1 255.3C308.4 258.7 314.8 267.9 318.5 273.8C322.1 279.7 327.7 285.6 331.9 290.6C336.1 295.7 340.1 299.9 343.7 304.1C347.3 308.3 349.9 313.0 353.8 315.8C357.7 318.6 362.7 320.6 367.2 320.9C371.7 321.2 376.2 319.5 380.7 317.5C385.2 315.6 389.6 313.0 394.1 309.1C398.6 305.2 407.0 296.5 407.6 294.0C408.1 291.5 401.4 293.2 397.5 294.0C393.6 294.8 388.5 297.9 384.0 299.0C379.6 300.2 374.8 301.6 370.6 300.7C366.4 299.9 362.5 297.1 358.8 294.0C355.2 290.9 352.1 286.7 348.7 282.2C345.4 277.7 342.0 271.9 338.7 267.1C335.3 262.3 333.3 255.6 328.6 253.7C323.8 251.7 311.8 252.0 310.1 255.3Z" fill="#ec6640" opacity="0.95" filter="url(#b3)" />
<path d="M313.4 238.5C314.6 236.0 321.8 234.0 326.9 233.5C331.9 232.9 341.2 233.5 343.7 235.2C346.2 236.8 345.9 241.3 342.0 243.6C338.1 245.8 324.9 249.5 320.2 248.6C315.4 247.8 312.3 241.1 313.4 238.5Z" fill="#e87a58" opacity="0.7" filter="url(#b2)" />
<path d="M400.8 270.5C402.8 267.7 413.6 265.4 417.6 265.4C421.7 265.4 425.2 267.9 425.2 270.5C425.2 273.0 420.9 278.6 417.6 280.5C414.4 282.5 408.7 283.9 405.9 282.2C403.1 280.5 398.9 273.3 400.8 270.5Z" fill="#ee8160" opacity="0.7" filter="url(#b3)" />
<path d="M348.7 267.1C350.1 264.6 352.9 261.5 355.5 262.1C358.0 262.6 361.9 267.7 363.9 270.5C365.8 273.3 368.3 277.0 367.2 278.9C366.1 280.7 360.5 281.7 357.1 281.4C353.8 281.1 348.5 279.6 347.1 277.2C345.7 274.8 347.3 269.6 348.7 267.1Z" fill="#ea7d5c" opacity="0.8" filter="url(#b2)" />
<path d="M350.4 279.7C351.4 279.9 354.5 281.0 356.3 280.9C358.1 280.7 360.5 279.2 361.3 278.9" fill="none" stroke="#b8442e" stroke-width="1.2" stroke-linecap="round" stroke-linejoin="round" filter="url(#b1)" />
</g>
<path d="M345.0 290.3C345.7 289.2 351.5 288.5 354.6 288.6C357.8 288.7 360.0 290.1 363.9 291.0C367.7 291.9 376.8 293.0 377.6 294.0C378.5 295.0 370.1 296.2 368.9 297.0C367.7 297.9 370.9 297.9 370.6 299.0C370.3 300.2 369.5 303.0 367.2 304.1C365.0 305.1 359.8 306.1 357.1 305.3C354.5 304.4 352.4 300.7 351.3 299.0C350.1 297.4 351.5 296.8 350.4 295.3C349.4 293.9 344.3 291.4 345.0 290.3Z" fill="#cd5c48" />
<path d="M350.4 293.2C351.8 292.9 359.5 293.8 363.9 294.0C368.2 294.2 375.9 293.7 376.5 294.2C377.0 294.6 370.7 296.4 367.2 296.7C363.7 296.9 358.3 296.3 355.5 295.7C352.7 295.1 349.0 293.4 350.4 293.2Z" fill="#a23a30" />
<path d="M358.0 294.7C359.0 294.4 363.7 294.6 364.7 295.0C365.7 295.4 364.8 296.7 363.9 297.0C362.9 297.3 359.8 297.1 358.8 296.7C357.8 296.3 357.0 294.9 358.0 294.7Z" fill="#f6e6dc" />
<path d="M355.5 299.0C357.0 298.2 365.5 298.3 367.2 299.0C368.9 299.7 367.1 302.5 365.5 303.2C364.0 304.0 359.7 304.4 358.0 303.7C356.3 303.0 353.9 299.8 355.5 299.0Z" fill="#e07a62" filter="url(#b1)" />
<path d="M321.0 239.2C321.9 238.3 325.3 237.7 326.6 239.2C327.9 240.7 329.2 246.7 329.0 248.4C328.8 250.1 326.7 250.2 325.4 249.6C324.1 249.0 322.1 246.5 321.4 244.8C320.7 243.1 320.1 240.1 321.0 239.2Z" fill="#f3c8b0" />
<path d="M326.2 239.2C327.2 239.0 329.7 240.1 331.8 241.6C333.9 243.1 337.5 246.8 339.0 248.4C340.5 250.0 341.2 250.6 340.6 251.2C340.0 251.8 337.3 252.5 335.4 252.0C333.5 251.5 330.6 249.5 329.0 248.0C327.4 246.5 326.4 244.4 326.0 243.0C325.5 241.5 325.2 239.4 326.2 239.2Z" fill="#7e2426" />
<path d="M331.4 246.0C332.3 246.1 335.7 248.3 337.0 249.2C338.3 250.1 339.6 250.8 339.4 251.2C339.2 251.6 337.1 251.8 335.8 251.4C334.5 251.0 332.5 249.7 331.8 248.8C331.1 247.9 330.5 245.9 331.4 246.0Z" fill="#b02c28" />
<path d="M319.0 234.6C320.1 234.9 323.6 235.3 325.8 236.2C328.0 237.2 330.3 238.7 332.2 240.2C334.1 241.7 335.6 243.5 337.0 245.2C338.4 246.9 340.0 249.5 340.6 250.4" fill="none" stroke="#3a2024" stroke-width="2.2" stroke-linecap="round" stroke-linejoin="round" />
<path d="M341.0 247.6 L343.8 251.8" fill="none" stroke="#f6dcc8" stroke-width="1.2" stroke-linecap="round" stroke-linejoin="round" />
<path d="M376.0 252.0C376.0 250.7 380.1 247.2 382.0 246.0C383.9 244.8 386.1 243.7 387.2 244.8C388.3 245.9 389.3 251.3 388.4 252.8C387.5 254.3 384.1 254.0 382.0 253.8C379.9 253.7 376.0 253.3 376.0 252.0Z" fill="#f2d8c2" />
<path d="M386.4 246.0C386.9 244.7 388.2 242.8 390.0 242.0C391.8 241.2 395.3 240.8 397.2 241.2C399.1 241.6 401.0 242.9 401.6 244.4C402.2 245.9 401.8 248.5 400.8 250.0C399.8 251.5 397.5 252.8 395.6 253.4C393.7 253.9 391.1 253.9 389.6 253.4C388.1 252.8 387.3 251.2 386.8 250.0C386.3 248.8 385.9 247.3 386.4 246.0Z" fill="#b82c26" />
<path d="M386.4 246.0C386.9 244.9 388.2 242.7 390.0 241.8C391.8 241.0 395.2 240.6 397.2 241.0C399.2 241.5 401.2 243.3 401.8 244.4C402.5 245.5 402.5 246.9 401.2 247.6C399.9 248.3 396.3 248.3 394.0 248.4C391.7 248.5 388.5 248.8 387.2 248.4C385.9 248.0 385.9 247.1 386.4 246.0Z" fill="#4c1a1e" />
<path d="M388.8 244.8C389.3 244.5 391.5 244.5 392.0 244.8C392.5 245.1 392.5 246.1 392.0 246.4C391.5 246.7 389.6 246.7 389.0 246.4C388.5 246.1 388.3 245.1 388.8 244.8Z" fill="#f4d0c8" />
<path d="M378.4 247.4C378.3 246.9 382.1 243.9 384.4 242.6C386.7 241.4 389.7 240.2 392.4 239.8C395.1 239.3 398.2 239.4 400.4 239.8C402.6 240.1 403.9 241.5 405.6 241.8C407.3 242.0 410.3 240.8 410.4 241.2C410.5 241.6 407.7 243.7 406.0 244.0C404.3 244.3 402.7 243.1 400.4 243.0C398.1 242.8 394.9 242.5 392.4 243.0C389.9 243.4 387.5 244.9 385.2 245.7C382.9 246.4 378.5 247.9 378.4 247.4Z" fill="#2e181c" />
<path d="M376.8 253.0C379.0 253.2 385.8 254.6 390.0 254.2C394.2 253.7 399.1 251.9 402.0 250.2C404.9 248.4 406.7 244.8 407.6 243.8" fill="none" stroke="#b4583e" stroke-width="0.8" stroke-linecap="round" stroke-linejoin="round" />
<path d="M374.8 252.4 L378.4 247.4" fill="none" stroke="#4a2828" stroke-width="0.9" stroke-linecap="round" stroke-linejoin="round" />
<path d="M376.4 227.8C378.7 227.4 385.7 225.9 390.0 225.4C394.3 224.8 399.1 224.2 402.0 224.6C404.9 224.9 406.0 226.4 407.6 227.6C409.2 228.8 411.1 231.1 411.8 231.8" fill="none" stroke="#a04a38" stroke-width="1.5" stroke-linecap="round" stroke-linejoin="round" filter="url(#b1)" />
<path d="M318.5 233.8C320.2 233.5 325.2 231.6 328.6 231.8C331.9 232.0 337.0 234.6 338.7 235.2" fill="none" stroke="#7a3a34" stroke-width="1.2" stroke-linecap="round" stroke-linejoin="round" filter="url(#b1)" />
<path d="M312.6 252.0C312.2 252.8 313.7 256.0 315.0 258.0C316.3 260.0 318.7 262.3 320.6 263.8C322.5 265.3 324.2 266.9 326.6 267.0C329.0 267.0 334.6 264.8 335.0 264.2C335.4 263.7 331.0 264.2 329.0 263.4C327.0 262.6 324.9 261.2 323.0 259.4C321.1 257.7 319.1 254.3 317.4 253.0C315.7 251.8 313.0 251.2 312.6 252.0Z" fill="#fff6ee" filter="url(#b1)" />
<path d="M313.4 251.2C313.1 252.0 314.9 255.6 316.2 257.6C317.5 259.6 319.6 261.8 321.4 263.2C323.2 264.6 325.2 265.6 327.0 265.8C328.8 266.0 332.0 264.9 332.2 264.4C332.4 263.9 329.7 263.9 328.2 263.0C326.7 262.1 324.7 260.7 323.0 259.0C321.3 257.3 319.4 254.1 317.8 252.8C316.2 251.5 313.7 250.4 313.4 251.2Z" fill="#ffffff" />
<path d="M314.4 261.8 L318.6 267.8" fill="none" stroke="#fff4ea" stroke-width="1.6" stroke-linecap="round" stroke-linejoin="round" />
<path d="M391.0 267.8C392.1 266.6 397.5 265.1 400.4 263.4C403.3 261.8 405.9 259.5 408.4 257.8C410.9 256.2 414.3 253.3 415.2 253.6C416.1 253.9 414.8 257.6 413.6 259.6C412.4 261.6 409.9 263.7 407.8 265.4C405.6 267.0 402.9 268.5 400.6 269.4C398.2 270.2 395.4 270.5 393.8 270.2C392.2 270.0 389.9 268.9 391.0 267.8Z" fill="#fff0e4" opacity="0.9" filter="url(#b2)" />
<path d="M392.8 268.0C393.9 267.1 398.2 265.8 400.8 264.2C403.4 262.7 406.2 260.3 408.4 258.8C410.6 257.3 413.2 255.1 413.8 255.2C414.5 255.3 413.5 257.9 412.4 259.4C411.3 261.0 409.2 262.9 407.2 264.4C405.2 265.9 402.5 267.5 400.4 268.4C398.3 269.3 395.7 269.7 394.4 269.6C393.1 269.5 391.7 268.9 392.8 268.0Z" fill="#ffffff" />
<path d="M346.0 218.0C347.7 216.0 352.3 209.8 356.0 206.0C359.7 202.2 366.0 196.8 368.0 195.0" fill="none" stroke="#d9b27a" stroke-width="3" stroke-linecap="round" stroke-linejoin="round" filter="url(#b1)" />
<path d="M418.0 186.0C414.3 188.2 403.7 193.5 396.0 199.0C388.3 204.5 379.7 214.5 372.0 219.0C364.3 223.5 357.0 224.0 350.0 226.0C343.0 228.0 336.2 229.0 330.0 231.0C323.8 233.0 315.8 236.8 313.0 238.0" fill="none" stroke="#4c4450" stroke-width="2.6" stroke-linecap="round" stroke-linejoin="round" />
<path d="M420.0 187.0C420.5 191.7 421.7 205.3 423.0 215.0C424.3 224.7 425.8 236.7 428.0 245.0C430.2 253.3 434.7 261.7 436.0 265.0" fill="none" stroke="#5a3c40" stroke-width="2.2" stroke-linecap="round" stroke-linejoin="round" />
<path d="M306.0 351.0C306.0 349.5 295.8 350.5 292.0 351.0C288.2 351.5 285.9 351.8 283.0 354.0C280.1 356.2 276.6 358.7 274.4 364.0C272.2 369.3 270.8 379.3 270.0 386.0C269.2 392.7 269.3 400.2 269.6 404.0C269.9 407.8 270.3 407.3 272.0 409.0C273.7 410.7 275.3 412.5 280.0 414.0C284.7 415.5 294.0 415.7 300.0 418.0C306.0 420.3 312.7 424.3 316.0 428.0C319.3 431.7 317.7 437.2 320.0 440.0C322.3 442.8 326.0 444.7 330.0 445.0C334.0 445.3 338.3 444.5 344.0 442.0C349.7 439.5 358.3 434.7 364.0 430.0C369.7 425.3 374.2 418.3 378.0 414.0C381.8 409.7 384.8 408.7 387.0 404.0C389.2 399.3 390.2 392.3 391.0 386.0C391.8 379.7 392.0 372.3 392.0 366.0C392.0 359.7 391.8 351.3 391.0 348.0C390.2 344.7 388.2 343.7 387.0 346.0C385.8 348.3 387.2 356.7 384.0 362.0C380.8 367.3 373.3 373.7 368.0 378.0C362.7 382.3 356.7 385.3 352.0 388.0C347.3 390.7 344.7 391.7 340.0 394.0C335.3 396.3 329.3 399.7 324.0 402.0C318.7 404.3 312.0 410.0 308.0 408.0C304.0 406.0 302.3 394.8 300.0 390.0C297.7 385.2 295.7 382.3 294.0 379.0C292.3 375.7 290.3 373.2 290.0 370.0C289.7 366.8 289.3 363.2 292.0 360.0C294.7 356.8 306.0 352.5 306.0 351.0Z" fill="#ea5c38" />
<path d="M306.0 412.0C307.0 408.3 318.3 406.7 326.0 404.0C333.7 401.3 346.3 395.3 352.0 396.0C357.7 396.7 361.3 403.0 360.0 408.0C358.7 413.0 349.3 421.7 344.0 426.0C338.7 430.3 332.0 434.0 328.0 434.0C324.0 434.0 323.7 429.7 320.0 426.0C316.3 422.3 305.0 415.7 306.0 412.0Z" fill="#f38263" opacity="0.85" filter="url(#b2)" />
<path d="M340.0 398.0C344.0 395.7 357.3 388.7 364.0 384.0C370.7 379.3 376.0 375.0 380.0 370.0C384.0 365.0 386.7 356.7 388.0 354.0" fill="none" stroke="#f47a58" stroke-width="4" stroke-linecap="round" stroke-linejoin="round" opacity="0.7" filter="url(#b1)" />
<path d="M287.0 357.0C290.8 355.5 300.5 352.8 306.0 353.0C311.5 353.2 316.0 355.2 320.0 358.0C324.0 360.8 327.0 366.0 330.0 370.0C333.0 374.0 335.5 378.5 338.0 382.0C340.5 385.5 344.7 388.7 345.0 391.0C345.3 393.3 343.5 393.8 340.0 396.0C336.5 398.2 329.2 401.9 324.0 404.0C318.8 406.1 312.3 409.7 309.0 408.4C305.7 407.1 305.7 400.1 304.0 396.0C302.3 391.9 300.8 387.5 299.0 384.0C297.2 380.5 295.3 377.3 293.0 375.0C290.7 372.7 286.7 372.2 285.0 370.0C283.3 367.8 282.7 364.2 283.0 362.0C283.3 359.8 283.2 358.5 287.0 357.0Z" fill="#6b5056" />
<path d="M288.0 378.0C286.1 380.0 282.2 386.3 281.4 390.0C280.6 393.7 281.2 397.3 283.0 400.0C284.8 402.7 288.0 404.6 292.0 406.0C296.0 407.4 305.2 410.1 307.0 408.4C308.8 406.7 304.5 399.9 303.0 396.0C301.5 392.1 299.7 388.0 298.0 385.0C296.3 382.0 294.7 379.2 293.0 378.0C291.3 376.8 289.9 376.0 288.0 378.0Z" fill="url(#chk)" />
<path d="M331.0 368.0C330.7 368.7 337.3 376.4 340.0 380.0C342.7 383.6 343.3 389.0 347.0 389.6C350.7 390.2 361.2 384.5 362.0 383.6C362.8 382.7 355.3 385.7 352.0 384.4C348.7 383.1 345.5 378.7 342.0 376.0C338.5 373.3 331.3 367.3 331.0 368.0Z" fill="url(#chk)" />
<path d="M308.0 350.0C310.7 350.8 319.3 352.0 324.0 355.0C328.7 358.0 332.3 362.5 336.0 368.0C339.7 373.5 344.3 384.7 346.0 388.0" fill="none" stroke="#4a3038" stroke-width="1.0" stroke-linecap="round" stroke-linejoin="round" />
<path d="M310.0 408.0C313.3 406.7 323.0 403.2 330.0 400.0C337.0 396.8 346.3 391.8 352.0 389.0C357.7 386.2 362.0 384.0 364.0 383.0" fill="none" stroke="#f0a088" stroke-width="1.2" stroke-linecap="round" stroke-linejoin="round" />
<path d="M342.0 445.0C340.0 448.4 347.7 449.7 352.0 452.4C356.3 455.1 364.7 463.1 368.0 461.0C371.3 458.9 372.7 444.8 372.0 440.0C371.3 435.2 369.0 431.2 364.0 432.0C359.0 432.8 344.0 441.6 342.0 445.0Z" fill="#5f4c56" />
<path d="M398.0 458.0C400.6 456.0 396.3 460.7 400.0 462.4C403.7 464.1 413.3 466.5 420.0 468.4C426.7 470.3 433.3 473.1 440.0 474.0C446.7 474.9 453.3 474.7 460.0 474.0C466.7 473.3 473.3 472.3 480.0 470.0C486.7 467.7 494.0 464.0 500.0 460.0C506.0 456.0 511.3 451.3 516.0 446.0C520.7 440.7 524.7 434.0 528.0 428.0C531.3 422.0 534.1 414.7 536.0 410.0C537.9 405.3 538.9 402.7 539.6 400.0C540.3 397.3 539.2 394.7 540.0 394.0C540.8 393.3 543.5 394.3 544.4 396.0C545.3 397.7 545.4 399.3 545.2 404.0C545.0 408.7 544.5 418.0 543.0 424.0C541.5 430.0 539.5 434.7 536.0 440.0C532.5 445.3 527.3 451.3 522.0 456.0C516.7 460.7 510.3 464.3 504.0 468.0C497.7 471.7 491.3 475.0 484.0 478.0C476.7 481.0 467.3 484.0 460.0 486.0C452.7 488.0 446.7 489.7 440.0 490.0C433.3 490.3 426.7 489.3 420.0 488.0C413.3 486.7 401.7 482.3 400.0 482.0C398.3 481.7 412.0 486.6 410.0 486.0C408.0 485.4 392.3 480.3 388.0 478.4C383.7 476.5 382.7 477.8 384.4 474.4C386.1 471.0 395.4 460.0 398.0 458.0Z" fill="url(#gSwoosh)" />
<path d="M406.0 466.4C409.3 467.4 418.7 470.5 426.0 472.4C433.3 474.3 446.0 476.7 450.0 477.6" fill="none" stroke="#e4dcdc" stroke-width="1.0" stroke-linecap="round" stroke-linejoin="round" />
<path d="M509.0 449.0C511.2 446.3 518.9 438.2 522.4 433.0C525.9 427.8 528.7 420.5 530.0 418.0" fill="none" stroke="#e4522e" stroke-width="3.0" stroke-linecap="round" stroke-linejoin="round" />
<path d="M499.0 407.0C498.7 403.7 501.0 399.2 503.0 396.0C505.0 392.8 507.8 390.0 511.0 388.0C514.2 386.0 518.3 384.2 522.0 384.0C525.7 383.8 529.8 384.8 533.0 387.0C536.2 389.2 539.2 392.8 541.0 397.0C542.8 401.2 544.0 406.8 544.0 412.0C544.0 417.2 542.7 423.3 541.0 428.0C539.3 432.7 536.5 436.5 534.0 440.0C531.5 443.5 528.5 447.8 526.0 449.0C523.5 450.2 519.0 449.2 519.0 447.0C519.0 444.8 524.0 439.8 526.0 436.0C528.0 432.2 530.0 428.0 531.0 424.0C532.0 420.0 532.5 415.3 532.0 412.0C531.5 408.7 529.8 405.8 528.0 404.0C526.2 402.2 523.2 401.0 521.0 401.0C518.8 401.0 516.3 402.5 515.0 404.0C513.7 405.5 512.8 408.2 513.0 410.0C513.2 411.8 516.2 413.7 516.0 415.0C515.8 416.3 513.8 417.8 512.0 418.0C510.2 418.2 507.2 417.8 505.0 416.0C502.8 414.2 499.3 410.3 499.0 407.0Z" fill="#e8502c" />
<path d="M520.0 392.0C521.0 391.7 527.2 392.0 530.0 394.0C532.8 396.0 535.7 400.0 537.0 404.0C538.3 408.0 538.7 413.3 538.0 418.0C537.3 422.7 533.3 432.7 533.0 432.0C532.7 431.3 536.2 419.0 536.0 414.0C535.8 409.0 534.0 405.0 532.0 402.0C530.0 399.0 526.0 397.7 524.0 396.0C522.0 394.3 519.0 392.3 520.0 392.0Z" fill="#f47858" opacity="0.8" filter="url(#b1)" />
<path d="M500.0 409.0C499.5 410.2 501.3 416.4 503.0 419.0C504.7 421.6 507.7 424.2 510.0 424.5C512.3 424.8 515.4 423.1 517.0 421.0C518.6 418.9 519.8 412.8 519.5 412.0C519.2 411.2 516.6 415.7 515.0 416.5C513.4 417.3 511.5 417.8 510.0 417.0C508.5 416.2 507.7 413.3 506.0 412.0C504.3 410.7 500.5 407.8 500.0 409.0Z" fill="#6a5252" />
<path d="M536.0 389.0C537.0 390.5 540.6 394.2 542.0 398.0C543.4 401.8 544.7 407.0 544.5 412.0C544.3 417.0 542.9 423.2 541.0 428.0C539.1 432.8 535.7 437.3 533.0 441.0C530.3 444.7 526.3 448.5 525.0 450.0" fill="none" stroke="#6a5258" stroke-width="3.4" stroke-linecap="round" stroke-linejoin="round" opacity="0.85" />
<path d="M522.0 383.5C524.0 383.9 530.7 383.9 534.0 386.0C537.3 388.1 540.7 394.3 542.0 396.0" fill="none" stroke="#6a5258" stroke-width="1.6" stroke-linecap="round" stroke-linejoin="round" />
<path d="M528.0 382.0C529.7 382.3 535.2 382.3 538.0 384.0C540.8 385.7 543.5 389.0 545.0 392.0C546.5 395.0 546.7 400.3 547.0 402.0" fill="none" stroke="#5e4a50" stroke-width="0.9" stroke-linecap="round" stroke-linejoin="round" />
<path d="M499.0 408.0C499.5 406.0 500.2 399.3 502.0 396.0C503.8 392.7 507.0 390.0 510.0 388.0C513.0 386.0 518.3 384.7 520.0 384.0" fill="none" stroke="#8a4038" stroke-width="1.2" stroke-linecap="round" stroke-linejoin="round" />
<circle cx="390.8" cy="242.6" r="39.3" fill="none" stroke="#f0f0f0" stroke-opacity="0.8" stroke-width="1"/>
<circle cx="390.8" cy="242.6" r="39.3" fill="#ffffff" fill-opacity="0.04"/>
</g>
</svg>

</div>

<!-- tool icon -->
<div class="abs" style="left:17px;top:16px;width:62px;height:58px;background:#f9a834"></div>
<div class="abs" style="left:23px;top:22px;width:50px;height:46px;background:#333"></div>
<svg class="abs" style="left:23px;top:22px" width="50" height="46" viewBox="23 22 50 46">
<path d="M42.6 41C42.2 36.4 43.8 33.2 47.2 32.4L59 32C59.9 35 60 40 58.7 43.5C57.6 46.3 55.6 47.8 53.2 48L49.5 47.6L43.6 45.2Z" fill="#dadada"/>
<path d="M51.5 41.5L43.4 51.6" stroke="#dadada" stroke-width="4.2" stroke-linecap="round" fill="none"/>
<path d="M49 40.2L45.9 44.9" stroke="#353535" stroke-width="1" stroke-linecap="round" fill="none"/>
<path d="M55 42L51 48L46.5 53.6" stroke="#353535" stroke-width="1.1" stroke-linecap="round" stroke-linejoin="round" fill="none"/>
<path d="M35.3 42.4C37.4 44.2 38.4 46.4 38.5 49L38.6 54.7L51 55.8L52.9 57" stroke="#dadada" stroke-width="1.5" fill="none" stroke-linejoin="round" stroke-linecap="round"/>
</svg>


<!-- bottom bar -->
<div class="abs" style="left:3px;top:607.5px;width:720px;height:11px;background:#525252"></div>
<div class="abs" style="left:3px;top:607.5px;width:169px;height:11px;background:#555555"></div>
<div class="abs" style="left:712px;top:5px;width:10px;height:613px;background:#525252"></div>
<div class="abs" style="left:0px;top:618.3px;width:723px;height:1.2px;background:#464646"></div>
<div class="abs" style="left:0px;top:619.5px;width:723px;height:6px;background:#525252"></div>
<svg class="abs" style="left:7px;top:609px" width="22" height="9" viewBox="0 0 22 9">
<rect x="0.75" y="0.75" width="7.6" height="7.4" rx="0.8" fill="none" stroke="#cfcfcf" stroke-width="1"/>
<path d="M2.6 4.5H6.5" stroke="#d8d8d8" stroke-width="1.1"/>
<rect x="13.25" y="0.75" width="7.6" height="7.4" rx="0.8" fill="none" stroke="#cfcfcf" stroke-width="1"/>
<path d="M15.1 4.5H19M17.05 2.5V6.5" stroke="#d8d8d8" stroke-width="1.1"/>
</svg>
<div class="abs" style="left:31px;top:608px;width:38.5px;height:10px;background:#565656"></div>
<div class="abs" style="left:70.3px;top:608px;width:13px;height:10px;background:#434343"></div>
<svg class="abs" style="left:73.5px;top:610.5px" width="7" height="5" viewBox="0 0 7 5"><path d="M1 1L3.5 3.6L6 1" fill="none" stroke="#e0e0e0" stroke-width="1.1"/></svg>
<div class="t z" style="top:606.99px;font-size:8.4px;line-height:12px;height:12px;left:-49.00px;width:200px;text-align:center;letter-spacing:-0.25px;">100%</div>

<!-- right column -->
<div class="abs" style="left:722px;top:5px;width:302px;height:620px;background:#545454"></div>
<div class="abs" style="left:722px;top:5px;width:1px;height:614px;background:#464646"></div>
<div class="abs" style="left:723px;top:5px;width:1px;height:614px;background:#4e4e4e"></div>
<div class="abs" style="left:730px;top:5px;width:290px;height:547px;background:#535353;border:1px solid #444"></div>
<div class="abs" style="left:1011px;top:26px;width:8px;height:525px;background:#4e4e4e"></div>
<div class="abs" style="left:730px;top:25px;width:290px;height:1px;background:#444"></div>
<div class="t b" style="top:9.20px;font-size:8.65px;line-height:12px;height:12px;left:735.00px;">Properties</div>
<svg class="abs" style="left:736.9px;top:32.4px" width="8" height="6" viewBox="0 0 8 6"><path d="M0 0.2H7L3.5 5.5Z" fill="#e8e8e8"/></svg>
<div class="t b" style="top:28.50px;font-size:8.65px;line-height:12px;height:12px;left:748.00px;">Brush Tool Options</div>
<div class="t " style="top:54.00px;font-size:8.65px;line-height:12px;height:12px;right:249.00px;">Size:</div>
<div class="t " style="top:78.60px;font-size:8.65px;line-height:12px;height:12px;right:249.00px;">Pressure:</div>
<div class="inp " style="left:832px;top:45.8px;width:31px;height:13.2px;line-height:11.2px">777</div>
<div class="inp " style="left:832px;top:72px;width:31px;height:13.2px;line-height:11.2px">100</div>
<div class="track" style="left:786.5px;top:66.2px;width:79.5px;background:#6e6e6e"></div>
<svg class="abs" style="left:811.2px;top:63.400000000000006px" width="10" height="7" viewBox="0 0 10 7"><path d="M1 5.9C1.2 3.4 2.9 0.9 5 0.9C7.1 0.9 8.8 3.4 9 5.9Z" fill="#f2f2f2" stroke="#3c3c3c" stroke-width="0.5"/></svg>
<div class="track" style="left:786.5px;top:92.2px;width:79.5px;background:#6e6e6e"></div>
<svg class="abs" style="left:857.3px;top:89.4px" width="10" height="7" viewBox="0 0 10 7"><path d="M1 5.9C1.2 3.4 2.9 0.9 5 0.9C7.1 0.9 8.8 3.4 9 5.9Z" fill="#f2f2f2" stroke="#3c3c3c" stroke-width="0.5"/></svg>
<div class="t " style="top:54.00px;font-size:8.65px;line-height:12px;height:12px;right:115.00px;">Density:</div>
<div class="t " style="top:78.60px;font-size:8.65px;line-height:12px;height:12px;right:115.00px;">Rate:</div>
<div class="inp focus" style="left:966px;top:45.6px;width:32px;height:13.6px;line-height:11.6px">68<span class="caret"></span></div>
<div class="inp disabled" style="left:966px;top:72px;width:31px;height:13.2px;line-height:11.2px">0</div>
<div class="track" style="left:920px;top:66.2px;width:80px;background:#6e6e6e"></div>
<svg class="abs" style="left:968px;top:63.400000000000006px" width="10" height="7" viewBox="0 0 10 7"><path d="M1 5.9C1.2 3.4 2.9 0.9 5 0.9C7.1 0.9 8.8 3.4 9 5.9Z" fill="#f2f2f2" stroke="#3c3c3c" stroke-width="0.5"/></svg>
<div class="track" style="left:920px;top:92.2px;width:80px;background:#6e6e6e"></div>
<svg class="abs" style="left:918px;top:89.4px" width="10" height="7" viewBox="0 0 10 7"><path d="M1 5.9C1.2 3.4 2.9 0.9 5 0.9C7.1 0.9 8.8 3.4 9 5.9Z" fill="#f2f2f2" stroke="#3c3c3c" stroke-width="0.5"/></svg>
<div class="cb d" style="left:738px;top:102.3px;width:9px;height:9px"></div>
<div class="t dis" style="top:100.60px;font-size:8.65px;line-height:12px;height:12px;left:752.30px;">Stylus Pressure</div>
<div class="cb" style="left:952px;top:102.3px;width:9px;height:9px"></div>
<div class="t " style="top:100.60px;font-size:8.65px;line-height:12px;height:12px;left:965.60px;">Pin Edges</div>
<div class="hl" style="left:731px;top:116.5px;width:280px;background:#454545"></div>
<svg class="abs" style="left:737.5px;top:123.8px" width="7" height="7" viewBox="0 0 7 7"><path d="M0.3 0.2V6.2L5.8 3.2Z" fill="#e6e6e6"/></svg>
<div class="t b" style="top:120.50px;font-size:8.65px;line-height:12px;height:12px;left:748.00px;">Face-Aware Liquify</div>
<div class="hl" style="left:731px;top:134.8px;width:280px;background:#454545"></div>
<svg class="abs" style="left:737.5px;top:142px" width="7" height="7" viewBox="0 0 7 7"><path d="M0.3 0.2V6.2L5.8 3.2Z" fill="#e6e6e6"/></svg>
<div class="t b" style="top:138.80px;font-size:8.65px;line-height:12px;height:12px;left:748.00px;">Load Mesh Options</div>
<div class="hl" style="left:731px;top:153.2px;width:280px;background:#454545"></div>
<svg class="abs" style="left:737.5px;top:160.3px" width="7" height="7" viewBox="0 0 7 7"><path d="M0.3 0.2V6.2L5.8 3.2Z" fill="#e6e6e6"/></svg>
<div class="t b" style="top:157.00px;font-size:8.65px;line-height:12px;height:12px;left:748.00px;">Mask Options</div>
<div class="hl" style="left:731px;top:171.8px;width:280px;background:#454545"></div>
<svg class="abs" style="left:736.9px;top:178.7px" width="8" height="6" viewBox="0 0 8 6"><path d="M0 0.2H7L3.5 5.5Z" fill="#e8e8e8"/></svg>
<div class="t b" style="top:175.00px;font-size:8.65px;line-height:12px;height:12px;left:748.00px;">View Options</div>
<div class="cb" style="left:737.3px;top:194.8px;width:9px;height:9px"></div>
<div class="t " style="top:192.80px;font-size:8.65px;line-height:12px;height:12px;left:751.20px;">Show Guides</div>
<div class="cb d" style="left:841px;top:194.8px;width:9px;height:9px"></div>
<div class="t dis" style="top:192.80px;font-size:8.65px;line-height:12px;height:12px;left:855.20px;">Show Face Overlay</div>
<svg class="abs" style="left:737.3px;top:210.6px" width="9" height="9" viewBox="0 0 9 9"><rect x="0" y="0" width="9" height="9" rx="1.3" fill="#cdcdcd"/><path d="M1.8 4.6L3.8 6.2L7.1 2.3" fill="none" stroke="#404040" stroke-width="1.3"/></svg>
<div class="t " style="top:209.00px;font-size:8.65px;line-height:12px;height:12px;left:751.20px;">Show Image</div>
<div class="cb" style="left:841px;top:210.6px;width:9px;height:9px"></div>
<div class="t " style="top:209.00px;font-size:8.65px;line-height:12px;height:12px;left:855.20px;">Show Mesh</div>
<div class="t dis" style="top:224.80px;font-size:8.65px;line-height:12px;height:12px;right:200.30px;">Mesh Size:</div>
<div class="sel " style="left:828px;top:225.3px;width:175.5px;height:11.7px"><svg class="abs" style="right:2px;top:2.3px" width="7" height="5" viewBox="0 0 7 5"><path d="M1 1L3.5 3.6L6 1" fill="none" stroke="#8a8a8a" stroke-width="1.1"/></svg></div>
<div class="t dis" style="top:225.05px;font-size:8.65px;line-height:12px;height:12px;left:833.70px;">Medium</div>
<div class="t dis" style="top:243.20px;font-size:8.65px;line-height:12px;height:12px;right:200.30px;">Mesh Color:</div>
<div class="sel " style="left:828px;top:243.8px;width:175.5px;height:11.7px"><svg class="abs" style="right:2px;top:2.3px" width="7" height="5" viewBox="0 0 7 5"><path d="M1 1L3.5 3.6L6 1" fill="none" stroke="#8a8a8a" stroke-width="1.1"/></svg></div>
<div class="t dis" style="top:243.55px;font-size:8.65px;line-height:12px;height:12px;left:833.70px;">Gray</div>
<div class="hl" style="left:736px;top:260px;width:271px;background:#454545"></div>
<svg class="abs" style="left:737.3px;top:265.5px" width="9" height="9" viewBox="0 0 9 9"><rect x="0" y="0" width="9" height="9" rx="1.3" fill="#cdcdcd"/><path d="M1.8 4.6L3.8 6.2L7.1 2.3" fill="none" stroke="#404040" stroke-width="1.3"/></svg>
<div class="t " style="top:263.90px;font-size:8.65px;line-height:12px;height:12px;left:751.20px;">Show Mask</div>
<div class="t " style="top:279.70px;font-size:8.65px;line-height:12px;height:12px;right:200.30px;">Mask Color:</div>
<div class="sel en" style="left:828px;top:280.2px;width:175.5px;height:12px"><svg class="abs" style="right:2px;top:2.5px" width="7" height="5" viewBox="0 0 7 5"><path d="M1 1L3.5 3.6L6 1" fill="none" stroke="#d8d8d8" stroke-width="1.1"/></svg></div>
<div class="t " style="top:280.10px;font-size:8.65px;line-height:12px;height:12px;left:833.70px;">Red</div>
<div class="hl" style="left:736px;top:297.2px;width:271px;background:#454545"></div>
<div class="cb" style="left:737.3px;top:302.3px;width:9px;height:9px"></div>
<div class="t " style="top:300.50px;font-size:8.65px;line-height:12px;height:12px;left:751.20px;">Show Backdrop</div>
<div class="t dis" style="top:316.50px;font-size:8.65px;line-height:12px;height:12px;right:200.30px;">Use:</div>
<div class="sel " style="left:828px;top:317.4px;width:175.5px;height:11.5px"><svg class="abs" style="right:2px;top:2.2px" width="7" height="5" viewBox="0 0 7 5"><path d="M1 1L3.5 3.6L6 1" fill="none" stroke="#8a8a8a" stroke-width="1.1"/></svg></div>
<div class="t dis" style="top:317.05px;font-size:8.65px;line-height:12px;height:12px;left:833.70px;">All Layers</div>
<div class="t dis" style="top:334.70px;font-size:8.65px;line-height:12px;height:12px;right:200.30px;">Mode:</div>
<div class="sel " style="left:828px;top:335.3px;width:175.5px;height:11.5px"><svg class="abs" style="right:2px;top:2.2px" width="7" height="5" viewBox="0 0 7 5"><path d="M1 1L3.5 3.6L6 1" fill="none" stroke="#8a8a8a" stroke-width="1.1"/></svg></div>
<div class="t dis" style="top:334.95px;font-size:8.65px;line-height:12px;height:12px;left:833.70px;">In Front</div>
<div class="t dis" style="top:350.80px;font-size:8.65px;line-height:12px;height:12px;right:200.30px;">Opacity:</div>
<div class="inp disabled" style="left:873.5px;top:352.6px;width:31px;height:14px;line-height:12px">50</div>
<div class="track" style="left:828px;top:372.4px;width:79px;background:#5e5e5e"></div>
<svg class="abs" style="left:862.3px;top:369.59999999999997px" width="10" height="7" viewBox="0 0 10 7"><path d="M1 5.9C1.2 3.4 2.9 0.9 5 0.9C7.1 0.9 8.8 3.4 9 5.9Z" fill="#f2f2f2" stroke="#3c3c3c" stroke-width="0.5"/></svg>
<div class="hl" style="left:731px;top:379.3px;width:280px;background:#454545"></div>
<svg class="abs" style="left:736.9px;top:386.3px" width="8" height="6" viewBox="0 0 8 6"><path d="M0 0.2H7L3.5 5.5Z" fill="#e8e8e8"/></svg>
<div class="t b" style="top:382.70px;font-size:8.65px;line-height:12px;height:12px;left:748.00px;">Brush Reconstruct Options</div>
<div class="btn" style="left:740px;top:401.8px;width:132.5px;height:14.2px;line-height:12.2px">Reconstruct...</div>
<div class="btn" style="left:880.2px;top:401.8px;width:120px;height:14.2px;line-height:12.2px">Restore All</div>
<svg class="abs" style="left:852px;top:563.8px" width="9" height="9" viewBox="0 0 9 9"><rect x="0" y="0" width="9" height="9" rx="1.3" fill="#cdcdcd"/><path d="M1.8 4.6L3.8 6.2L7.1 2.3" fill="none" stroke="#404040" stroke-width="1.3"/></svg>
<div class="t " style="top:562.60px;font-size:8.65px;line-height:12px;height:12px;left:866.40px;">Preview</div>
<div class="pill" style="left:800.8px;top:585.3px;width:66px;height:19.5px"></div>
<div class="t big" style="top:589.60px;font-size:9.8px;line-height:12px;height:12px;left:733.80px;width:200px;text-align:center;">Cancel</div>
<div class="pill off" style="left:882px;top:585.3px;width:65px;height:19.5px"></div>
<div class="t dis" style="top:589.53px;font-size:10px;line-height:12px;height:12px;left:814.50px;width:200px;text-align:center;">OK</div>

</div></body>
</html>
